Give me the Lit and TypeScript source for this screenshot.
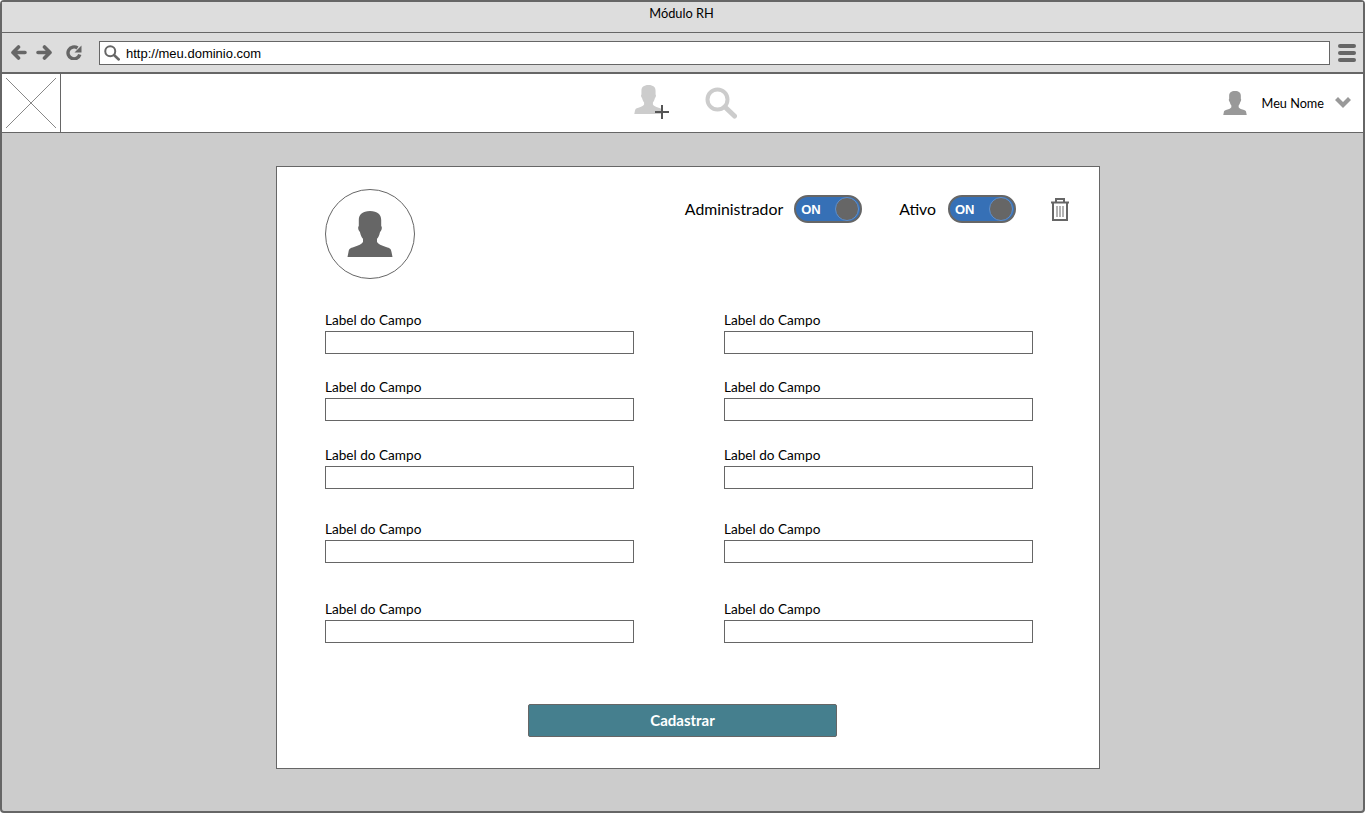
import { LitElement, html, css } from 'lit';
import { customElement } from 'lit/decorators.js';

const personPath =
  'M23 0C15.500 0 11.800 3.500 11.800 9V15C10.800 15.500 11 18.500 12.200 20C13 21 13.300 22 13.600 23.500C14.200 25.500 15 26.800 16 27.800V31C14.500 33 12 34.500 7 36C3 37 2 38 1.500 41L.5 46H45.500L44.500 41C44 38 43 37 39 36C34 34.500 31.500 33 30 31V27.800C31 26.800 31.800 25.500 32.400 23.500C32.700 22 33 21 33.800 20C35 18.500 35.200 15.500 34.200 15V9C34.200 3.500 30.500 0 23 0Z';

const person = (cls: string, fill: string) =>
  html`<svg class=${cls} viewBox="0 0 46 46"><path fill=${fill} d=${personPath}></path></svg>`;

const searchIcon = (cls: string, color: string) => html`<svg class=${cls} viewBox="0 0 32 32" fill="none" stroke=${color}>
  <circle cx="12.500" cy="12.500" r="10" stroke-width="4"></circle>
  <path d="M20 20l9.500 9" stroke-width="5" stroke-linecap="round"></path>
</svg>`;

@customElement('app-root')
class AppRoot extends LitElement {
  static styles = css`
    :host {
      display: block;
      width: 1365px;
      height: 813px;
      overflow: hidden;
      font-family: 'Lato', 'Noto Sans', sans-serif;
      color: #000;
    }

    * {
      box-sizing: border-box;
    }

    .window {
      height: 813px;
      display: flex;
      flex-direction: column;
      border: 2px solid #666;
      border-radius: 4px;
      background: #ccc;
    }

    .title-bar {
      flex: none;
      height: 31px;
      background: #ddd;
      border-bottom: 1px solid #666;
      text-align: center;
      font-size: 12.800px;
      line-height: 22px;
      padding-right: 2px;
    }

    .toolbar {
      flex: none;
      height: 41px;
      display: flex;
      align-items: center;
      background: #ddd;
      border-bottom: 2px solid #666;
      padding: 0 9px;
    }

    .tool-icon {
      flex: none;
      display: block;
      width: 16px;
      height: 15px;
    }

    .tool-icon.back {
      margin-right: 9px;
    }

    .tool-icon.forward {
      margin-right: 14px;
    }

    .address {
      flex: none;
      width: 1231px;
      height: 24px;
      margin-left: 17px;
      display: flex;
      align-items: center;
      background: #fff;
      border: 1px solid #666;
      font-family: 'Liberation Sans', Arial, sans-serif;
      font-size: 13px;
    }

    .address svg {
      width: 16px;
      height: 16px;
      margin: 0 6px 0 4px;
      flex: none;
    }

    .address span {
      padding-top: 1px;
    }

    .menu {
      flex: none;
      width: 18px;
      margin-left: 8px;
      display: flex;
      flex-direction: column;
      gap: 3px;
    }

    .menu span {
      height: 4px;
      border-radius: 2px;
      background: #666;
    }

    .navbar {
      flex: none;
      height: 59px;
      display: flex;
      align-items: center;
      background: #fff;
      border-bottom: 1px solid #666;
    }

    .logo {
      flex: none;
      width: 59px;
      height: 58px;
      border-right: 1px solid #666;
    }

    .logo svg {
      display: block;
      width: 58px;
      height: 58px;
    }

    .nav-actions {
      flex: none;
      margin-left: 573px;
      display: flex;
      align-items: center;
    }

    .add-user {
      position: relative;
      width: 36px;
      height: 38px;
    }

    .add-user .person {
      position: absolute;
      left: 0;
      top: 0;
      width: 29px;
      height: 31px;
    }

    .add-user .plus {
      position: absolute;
      left: 21px;
      top: 21px;
      width: 14px;
      height: 14px;
    }

    .nav-search {
      width: 32px;
      height: 32px;
      margin-left: 35px;
    }

    .nav-user {
      margin-left: auto;
      padding-right: 12px;
      display: flex;
      align-items: center;
      font-size: 12.700px;
    }

    .nav-user .avatar {
      width: 24px;
      height: 24px;
      margin-right: 15px;
    }

    .nav-user .chevron {
      width: 16px;
      height: 12px;
      margin-left: 11px;
    }

    .content {
      flex: 1;
      padding: 33px 0 0 274px;
    }

    .card {
      width: 824px;
      height: 603px;
      background: #fff;
      border: 1px solid #666;
      padding: 22px 0 0 48px;
    }

    .card-head {
      display: flex;
      justify-content: space-between;
      align-items: flex-start;
      height: 122px;
    }

    .photo {
      width: 90px;
      height: 90px;
      border: 1px solid #666;
      border-radius: 50%;
      display: flex;
      align-items: center;
      justify-content: center;
    }

    .photo svg {
      width: 46px;
      height: 46px;
    }

    .switches {
      display: flex;
      align-items: center;
      height: 28px;
      margin-top: 6px;
      margin-right: 29px;
      font-size: 15.800px;
    }

    .switch-label {
      margin-right: 11px;
      padding-bottom: 1px;
    }

    .switch-label.short {
      margin-right: 12px;
    }

    .toggle {
      width: 68px;
      height: 28px;
      margin-right: 37px;
      padding: 0 2px 0 5px;
      display: flex;
      align-items: center;
      justify-content: space-between;
      background: #3670b6;
      border: 2px solid #666;
      border-radius: 14px;
      color: #fff;
      font-family: 'Liberation Sans', Arial, sans-serif;
      font-size: 13px;
      font-weight: 700;
    }

    .toggle i {
      width: 24px;
      height: 24px;
      border-radius: 50%;
      background: #666;
      border: 1px solid #5b8fd0;
      margin-right: -1px;
    }

    .toggle.last {
      margin-right: 34px;
    }

    .trash {
      width: 20px;
      height: 24px;
    }

    .fields {
      display: grid;
      grid-template-columns: 309px 309px;
      grid-template-rows: 67px 68px 74px 80px 78px;
      column-gap: 90px;
    }

    .field label {
      display: block;
      height: 20px;
      padding-top: 1px;
      font-size: 13.600px;
      line-height: 17px;
    }

    .field div {
      height: 23px;
      background: #fff;
      border: 1px solid #666;
    }

    .actions {
      display: flex;
      padding: 26px 0 0 203px;
    }

    .btn {
      width: 309px;
      height: 33px;
      background: #457f8e;
      border: 1px solid #666;
      border-radius: 2px;
      color: #fff;
      font-family: inherit;
      font-size: 15px;
      font-weight: 700;
      padding: 0 0 2px;
    }
  `;

  private _rows = [0, 1, 2, 3, 4, 5, 6, 7, 8, 9];

  protected render() {
    return html`<div class="window">
      <div class="title-bar">Módulo RH</div>
      <div class="toolbar">
        <svg class="tool-icon back" viewBox="0 0 16 15" fill="none" stroke="#666" stroke-width="3.600" stroke-linecap="round" stroke-linejoin="round">
          <path d="M7.500 2L2 7.500 7.500 13M3 7.500h11"></path>
        </svg>
        <svg class="tool-icon forward" viewBox="0 0 16 15" fill="none" stroke="#666" stroke-width="3.600" stroke-linecap="round" stroke-linejoin="round">
          <path d="M8.500 2L14 7.500 8.500 13M13 7.500H2"></path>
        </svg>
        <svg class="tool-icon" viewBox="0 0 16 15" fill="none">
          <path stroke="#666" stroke-width="3.400" d="M13.800 9.500A6 6 0 1 1 11.500 3"></path>
          <path fill="#666" d="M15.500 .5v7h-7z"></path>
        </svg>
        <div class="address">${searchIcon('', '#666')}<span>http://meu.dominio.com</span></div>
        <div class="menu"><span></span><span></span><span></span></div>
      </div>
      <div class="navbar">
        <div class="logo">
          <svg viewBox="0 0 58 58" stroke="#888" fill="none">
            <path d="M4 4l50 50M54 4L4 54"></path>
          </svg>
        </div>
        <div class="nav-actions">
          <div class="add-user">
            ${person('person', '#ccc')}
            <svg class="plus" viewBox="0 0 14 14"><path fill="#555" d="M6 0h2v6h6v2H8v6H6V8H0V6h6z"></path></svg>
          </div>
          ${searchIcon('nav-search', '#ccc')}
        </div>
        <div class="nav-user">
          ${person('avatar', '#999')}
          <span>Meu Nome</span>
          <svg class="chevron" viewBox="0 0 16 12"><path fill="#999" d="M0 3l3-3 5 5 5-5 3 3-8 8z"></path></svg>
        </div>
      </div>
      <div class="content">
        <div class="card">
          <div class="card-head">
            <div class="photo">${person('', '#666')}</div>
            <div class="switches">
              <span class="switch-label">Administrador</span>
              <div class="toggle"><span>ON</span><i></i></div>
              <span class="switch-label short">Ativo</span>
              <div class="toggle last"><span>ON</span><i></i></div>
              <svg class="trash" viewBox="0 0 20 24" fill="none" stroke="#666">
                <path stroke-width="2" d="M1 5.500h18M6 4.500V2h8v2.500M3 6v17h14V6"></path>
                <path stroke-width="1" d="M7 9v11M10 9v11M13 9v11"></path>
              </svg>
            </div>
          </div>
          <div class="fields">
            ${this._rows.map(
              () => html`<div class="field"><label>Label do Campo</label><div></div></div>`
            )}
          </div>
          <div class="actions"><button class="btn">Cadastrar</button></div>
        </div>
      </div>
    </div>`;
  }
}
